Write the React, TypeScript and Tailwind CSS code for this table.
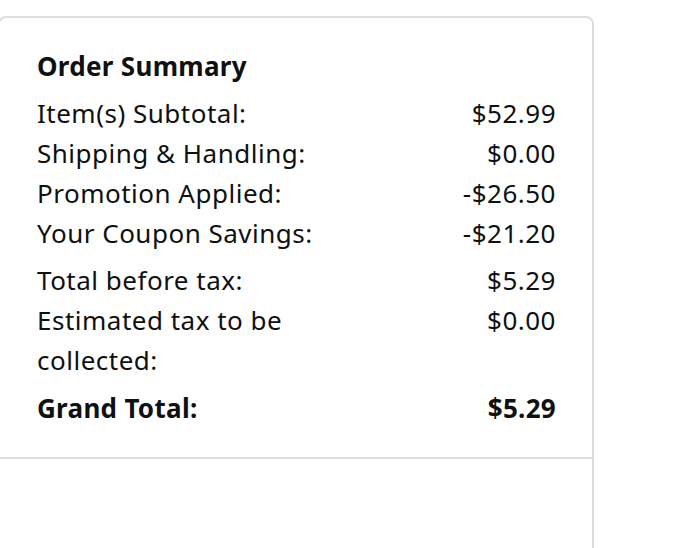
const rows = [
	{ label: 'Item(s) Subtotal:', value: '$52.99' },
	{ label: 'Shipping & Handling:', value: '$0.00' },
	{ label: 'Promotion Applied:', value: '-$26.50' },
	{ label: 'Your Coupon Savings:', value: '-$21.20' }
];

const taxRows = [
	{ label: 'Total before tax:', value: '$5.29' },
	{ label: 'Estimated tax to be collected:', value: '$0.00' }
];

function Row({ label, value, bold }: { label: string; value: string; bold?: boolean }) {
	return (
		<div className={`flex ${bold ? 'font-bold tracking-[0.3px]' : 'tracking-[0.5px]'}`}>
			<div className="w-[300px]">{label}</div>
			<div className="flex-1 text-right">{value}</div>
		</div>
	);
}

export default function App() {
	return (
		<div className="h-[548px] bg-white overflow-hidden text-[#0f1111]" style={{ fontFamily: '"Noto Sans", "Open Sans", sans-serif' }}>
			<div className="-ml-[2px] mt-[16px] w-[596px] h-[600px] border-2 border-[#dddddd] rounded-lg">
				<div className="pl-[37px] pr-[36px] pt-[28px] pb-[29px] text-[26px] leading-[40px] border-b-2 border-[#dddddd]">
					<h2 className="font-bold tracking-[0.3px]">Order Summary</h2>
					<div className="mt-[7px]">
						{rows.map((r) => (
							<Row key={r.label} {...r} />
						))}
					</div>
					<div className="mt-[7px]">
						{taxRows.map((r) => (
							<Row key={r.label} {...r} />
						))}
					</div>
					<div className="mt-[8px]">
						<Row label="Grand Total:" value="$5.29" bold />
					</div>
				</div>
			</div>
		</div>
	);
}
